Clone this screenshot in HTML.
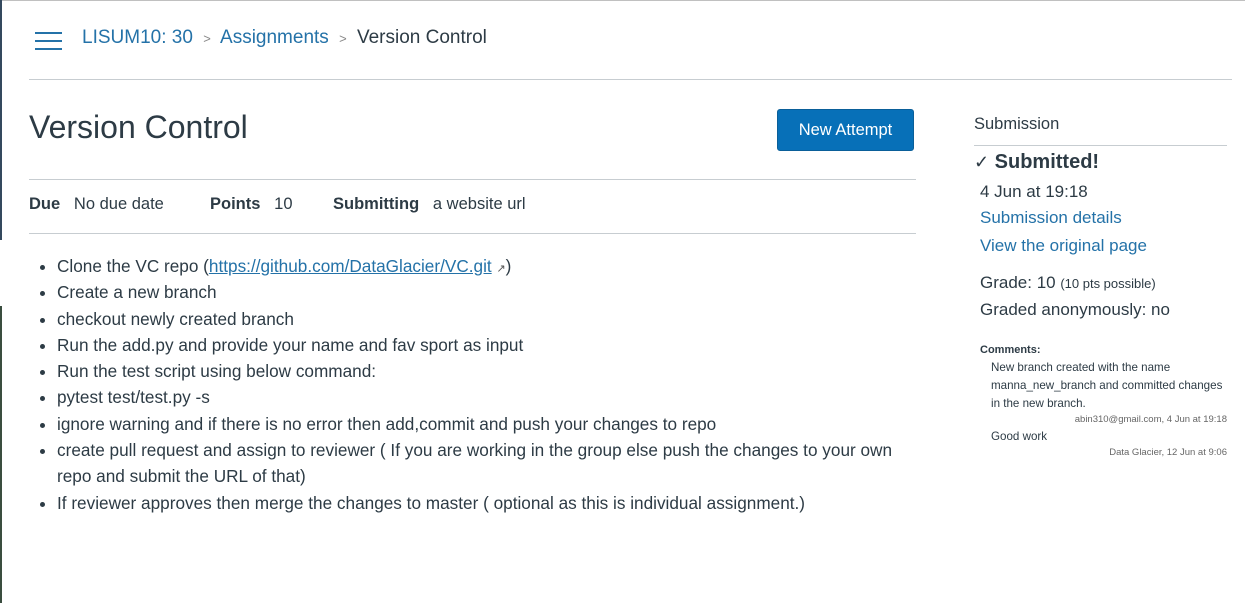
<!DOCTYPE html>
<html><head><meta charset="utf-8"><style>
*{margin:0;padding:0;box-sizing:border-box}
body{width:1245px;height:603px;background:#fff;font-family:"Liberation Sans",sans-serif;color:#2d3b45;position:relative;overflow:hidden}
.a{position:absolute;white-space:nowrap}
.l{color:#2472a8}
.hr{position:absolute;height:1px;background:#c7cdd1}
ul{position:absolute;left:38px;top:253px;list-style:none;font-size:17.2px;width:880px}
ul li{padding-left:19px;position:relative;white-space:nowrap;height:26.3px;line-height:26.3px}
ul li.b:before{content:"";position:absolute;left:2px;top:12px;width:5px;height:5px;border-radius:50%;background:#2d3b45}
.side{font-size:17px}
</style></head><body>
<div style="position:absolute;left:0;top:0;width:1245px;height:1px;background:#c0c0c0"></div>
<div style="position:absolute;left:0;top:0;width:2px;height:240px;background:#34495e"></div>
<div style="position:absolute;left:0;top:306px;width:2px;height:297px;background:#3a4d3f"></div>
<div style="position:absolute;left:35px;top:32px;width:27px;height:2px;background:#2472a8"></div>
<div style="position:absolute;left:35px;top:40px;width:27px;height:2px;background:#2472a8"></div>
<div style="position:absolute;left:35px;top:48px;width:27px;height:2px;background:#2472a8"></div>
<div class="a" style="left:82px;top:27px;font-size:19px"><span class="l">LISUM10: 30</span> <span style="color:#888;font-size:13px;margin:0 5px">&gt;</span> <span class="l">Assignments</span> <span style="color:#888;font-size:13px;margin:0 5px">&gt;</span> Version Control</div>
<div class="hr" style="left:29px;top:79px;width:1203px"></div>
<div class="a" style="left:29px;top:109px;font-size:32px">Version Control</div>
<div class="a" style="left:777px;top:109px;width:137px;height:42px;background:#0770b8;border:1px solid #0a5f99;border-radius:3px;color:#fff;font-size:16.5px;text-align:center;line-height:40px">New Attempt</div>
<div class="hr" style="left:29px;top:179px;width:887px"></div>
<div class="a" style="left:29px;top:195px;font-size:16.5px"><b>Due</b>&nbsp;&nbsp; No due date</div>
<div class="a" style="left:210px;top:195px;font-size:16.5px"><b>Points</b>&nbsp;&nbsp; 10</div>
<div class="a" style="left:333px;top:195px;font-size:16.5px"><b>Submitting</b>&nbsp;&nbsp; a website url</div>
<div class="hr" style="left:29px;top:233px;width:887px"></div>
<ul>
<li class="b">Clone the VC repo (<span class="l" style="text-decoration:underline">https://github.com/DataGlacier/VC.git</span> <span style="font-size:11px;color:#555">&#8599;</span>)</li>
<li class="b">Create a new branch</li>
<li class="b">checkout newly created branch</li>
<li class="b">Run the add.py and provide your name and fav sport as input</li>
<li class="b">Run the test script using below command:</li>
<li class="b">pytest test/test.py -s</li>
<li class="b">ignore warning and if there is no error then add,commit and push your changes to repo</li>
<li class="b">create pull request and assign to reviewer ( If you are working in the group else push the changes to your own</li>
<li>repo and submit the URL of that)</li>
<li class="b">If reviewer approves then merge the changes to master ( optional as this is individual assignment.)</li>
</ul>
<div class="a" style="left:974px;top:115px;font-size:16.5px">Submission</div>
<div class="hr" style="left:974px;top:145px;width:253px"></div>
<div class="a" style="left:974px;top:151px;font-size:20px;font-weight:bold"><span style="font-weight:normal;font-size:18px">&#10003;</span> Submitted!</div>
<div class="a side" style="left:980px;top:182px">4 Jun at 19:18</div>
<div class="a side l" style="left:980px;top:208px">Submission details</div>
<div class="a side l" style="left:980px;top:236px">View the original page</div>
<div class="a side" style="left:980px;top:273px">Grade: 10 <span style="font-size:13px">(10 pts possible)</span></div>
<div class="a side" style="left:980px;top:300px">Graded anonymously: no</div>
<div class="a" style="left:980px;top:344px;font-size:11px;font-weight:bold">Comments:</div>
<div class="a" style="left:991px;top:359px;font-size:11.6px;line-height:18px">New branch created with the name<br>manna_new_branch and committed changes<br>in the new branch.</div>
<div class="a" style="right:18px;top:414px;font-size:9.5px;color:#666">abin310@gmail.com, 4 Jun at 19:18</div>
<div class="a" style="left:991px;top:430px;font-size:11.6px">Good work</div>
<div class="a" style="right:18px;top:447px;font-size:9.5px;color:#666">Data Glacier, 12 Jun at 9:06</div>
</body></html>
